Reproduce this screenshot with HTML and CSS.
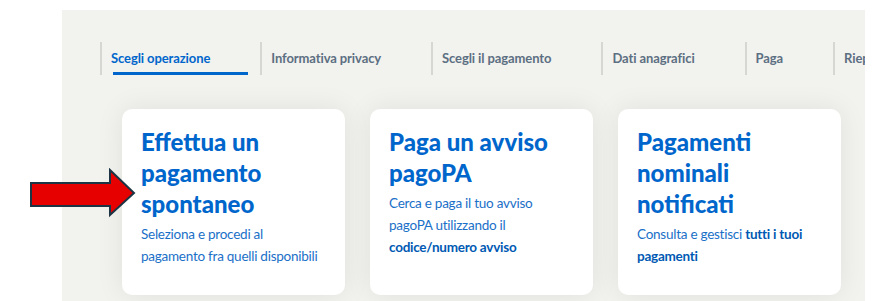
FILE: index.html
```html
<!DOCTYPE html>
<html lang="it">
<head>
    <meta charset="UTF-8">
    <meta name="viewport" content="width=device-width, initial-scale=1.0">
    <title>Pagamenti - Scegli operazione</title>
    <link rel="stylesheet" href="styles.css">
</head>
<body>
    <div class="pannello">
        <!-- Passi del percorso -->
        <ul class="passi">
            <li class="passo attivo">Scegli operazione</li>
            <li class="passo">Informativa privacy</li>
            <li class="passo">Scegli il pagamento</li>
            <li class="passo">Dati anagrafici</li>
            <li class="passo">Paga</li>
            <li class="passo">Riepilogo</li>
        </ul>

        <!-- Operazioni disponibili -->
        <div class="schede">
            <div class="scheda">
                <h2>Effettua un pagamento spontaneo</h2>
                <p>Seleziona e procedi al pagamento fra quelli disponibili</p>
            </div>
            <div class="scheda">
                <h2>Paga un avviso pagoPA</h2>
                <p>Cerca e paga il tuo avviso pagoPA utilizzando il <strong>codice/numero avviso</strong></p>
            </div>
            <div class="scheda">
                <h2>Pagamenti nominali notificati</h2>
                <p>Consulta e gestisci <strong>tutti i tuoi pagamenti</strong></p>
            </div>
        </div>
    </div>

    <svg class="freccia" width="108" height="50" viewBox="0 0 108 50">
        <polygon points="2,15 81,15 81,2 105,25 81,47 81,38 2,38" fill="#e60000" stroke="#1c3444" stroke-width="2" stroke-linejoin="miter"/>
    </svg>
</body>
</html>
```

FILE: styles.css
```css
body {
    margin: 0;
    padding: 0;
    background-color: #fff;
    font-family: Lato, "Open Sans", sans-serif;
    height: 301px;
    overflow: hidden;
}
.pannello {
    margin: 10px 0 0 62px;
    width: 803px;
    height: 291px;
    background-color: #f2f2ee;
    overflow: hidden;
}
.passi {
    list-style: none;
    margin: 0;
    padding: 32px 0 0 38px;
    display: flex;
    white-space: nowrap;
}
.passo {
    position: relative;
    flex: none;
    height: 33px;
    line-height: 32px;
    padding: 0 50px 0 9px;
    border-left: 2px solid #d6d6d2;
    font-size: 13px;
    font-weight: 700;
    letter-spacing: -0.1px;
    color: #5c6f82;
}
.passo.attivo {
    color: #0066cc;
}
.passo.attivo::after {
    content: "";
    position: absolute;
    left: 11px;
    right: 12px;
    bottom: 0;
    height: 3px;
    background-color: #0066cc;
}
.schede {
    display: flex;
    gap: 25px;
    padding: 34px 0 0 60px;
}
.scheda {
    flex: none;
    width: 223px;
    height: 186px;
    box-sizing: border-box;
    padding: 17px 19px;
    background-color: #fff;
    border-radius: 10px;
    box-shadow: 0 0 28px rgba(0, 0, 0, 0.08);
}
.scheda h2 {
    margin: 0;
    font-size: 24px;
    line-height: 31px;
    font-weight: 900;
    color: #0066cc;
}
.scheda p {
    margin: 4px 0 0;
    font-size: 13.5px;
    letter-spacing: -0.25px;
    line-height: 22px;
    color: #1a70c8;
}
.scheda strong {
    color: #0059b3;
}
.freccia {
    position: absolute;
    left: 29px;
    top: 168px;
}
```
